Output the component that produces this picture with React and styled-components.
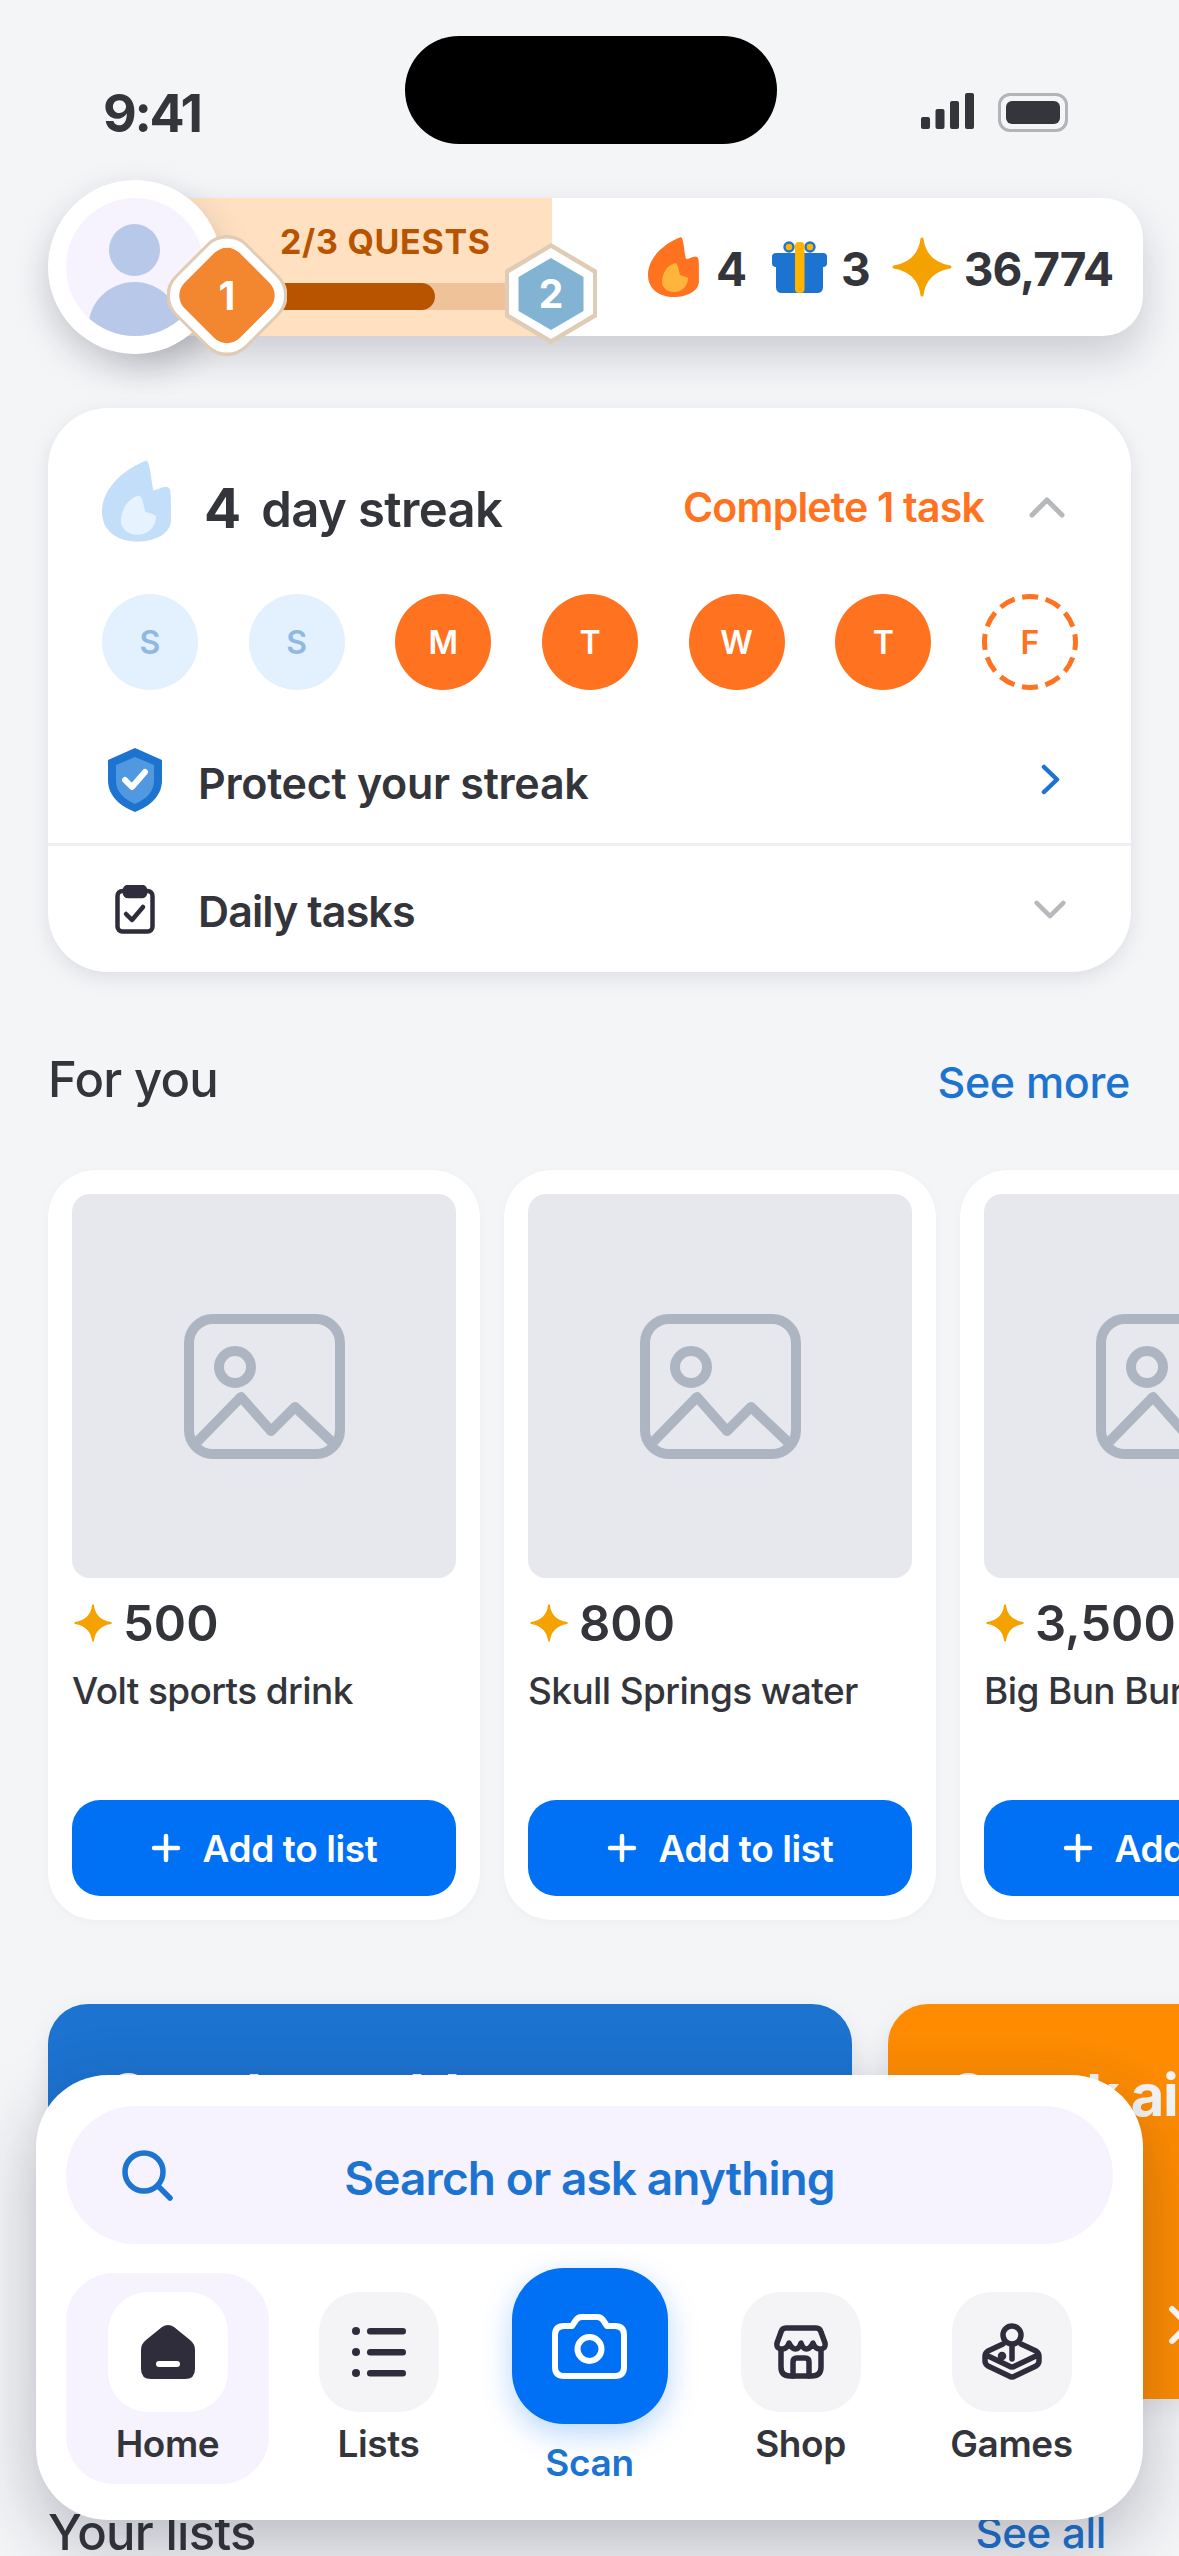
import styled, { createGlobalStyle } from "styled-components";

const ink = "#33353B";
const navInk = "#2F2D3C";
const linkBlue = "#1C73D0";
const brightBlue = "#0070F5";
const flameOrange = "#FF7220";

const GlobalStyle = createGlobalStyle`
  html, body {
    margin: 0;
    background: #F4F5F7;
  }
  * {
    box-sizing: border-box;
  }
  body {
    font-family: "Inter", "Liberation Sans", sans-serif;
    color: ${ink};
  }
`;

const Page = styled.div`
  position: relative;
  width: 1179px;
  height: 2556px;
  overflow: hidden;
  background: #F4F5F7;
`;

const StatusBar = styled.div`
  position: relative;
  height: 180px;
  display: flex;
  justify-content: space-between;
  padding: 88px 111px 0 103px;
`;

const Time = styled.div`
  font-size: 52px;
  line-height: 52px;
  font-weight: 700;
  letter-spacing: -2.3px;
  color: ${ink};
`;

const Notch = styled.div`
  position: absolute;
  top: 36px;
  left: 405px;
  width: 372px;
  height: 108px;
  border-radius: 54px;
  background: #000;
`;

const StatusIcons = styled.div`
  display: flex;
  gap: 24px;
  padding-top: 5px;
  align-items: flex-start;
`;

const Battery = styled.div`
  width: 70px;
  height: 39px;
  padding: 5px;
  border: 3px solid #B4B4B8;
  border-radius: 12px;
  &::after {
    content: "";
    display: block;
    height: 100%;
    border-radius: 6px;
    background: #34363B;
  }
`;

const HeaderRow = styled.div`
  position: relative;
  display: flex;
  height: 174px;
  margin: 0 36px 0 48px;
`;

const Avatar = styled.div`
  position: relative;
  z-index: 2;
  flex: 0 0 174px;
  height: 174px;
  padding: 18px;
  border-radius: 50%;
  background: #fff;
  box-shadow: 0 14px 34px rgba(30, 30, 50, 0.22);
`;

const AvatarFace = styled.div`
  width: 138px;
  height: 138px;
  border-radius: 50%;
  background: #F6F3FE;
  overflow: hidden;
`;

const Bar = styled.div`
  display: flex;
  flex: 1;
  height: 138px;
  margin: 18px 0 0 -90px;
  border-radius: 0 40px 40px 0;
  background: #fff;
  box-shadow: 0 20px 40px rgba(30, 30, 50, 0.18);
`;

const QuestZone = styled.div`
  position: relative;
  flex: 0 0 420px;
  display: flex;
  flex-direction: column;
  padding: 24px 0 0 148px;
  background: #FFE1C2;
`;

const QuestLabel = styled.div`
  font-size: 34px;
  line-height: 40px;
  font-weight: 700;
  letter-spacing: 0.7px;
  white-space: nowrap;
  color: #B85400;
`;

const Track = styled.div`
  width: 285px;
  height: 27px;
  margin: 21px 0 0 -45px;
  background: #EFC299;
`;

const TrackFill = styled.div`
  width: 200px;
  height: 100%;
  border-radius: 0 14px 14px 0;
  background: #B85400;
`;

const Badge = styled.div`
  position: absolute;
  z-index: 3;
  top: ${(p) => p.$top}px;
  left: ${(p) => p.$left}px;
  width: ${(p) => p.$w}px;
  height: ${(p) => p.$h}px;
  display: flex;
  align-items: center;
  justify-content: center;
  font-size: 39px;
  font-weight: 700;
  color: #fff;
  svg {
    position: absolute;
    inset: 0;
  }
  span {
    position: relative;
  }
`;

const Stats = styled.div`
  flex: 1;
  display: flex;
  align-items: center;
  padding: 0 0 0 96px;
`;

const StatValue = styled.div`
  margin: 4px ${(p) => p.$after}px 0 ${(p) => p.$before}px;
  font-size: 46px;
  font-weight: 700;
  line-height: 60px;
  letter-spacing: -1px;
  color: ${ink};
`;

const StreakCard = styled.section`
  margin: 54px 48px 0;
  height: 564px;
  border-radius: 60px;
  background: #fff;
  box-shadow: 0 6px 20px rgba(30, 30, 50, 0.1);
  padding-top: 52px;
`;

const StreakHead = styled.div`
  display: flex;
  align-items: center;
  height: 82px;
  padding: 0 66px 0 54px;
`;

const StreakCount = styled.div`
  margin: 14px 0 0 33px;
  font-size: 55px;
  font-weight: 700;
  color: ${ink};
`;

const StreakLabel = styled.div`
  margin: 16px 0 0 20px;
  font-size: 49px;
  font-weight: 600;
  letter-spacing: -0.6px;
  color: ${ink};
`;

const StreakGoal = styled.div`
  margin: 12px 45px 0 auto;
  font-size: 41px;
  font-weight: 600;
  letter-spacing: -0.8px;
  color: ${flameOrange};
`;

const ChevronSlot = styled.div`
  display: flex;
  margin-top: 13px;
`;

const Days = styled.div`
  display: flex;
  justify-content: space-between;
  margin-top: 52px;
  padding: 0 53px 0 54px;
`;

const Day = styled.div`
  position: relative;
  width: 96px;
  height: 96px;
  display: flex;
  align-items: center;
  justify-content: center;
  border-radius: 50%;
  font-size: 32px;
  font-weight: 600;
  background: ${(p) => (p.$state === "missed" ? "#E3F1FF" : p.$state === "done" ? flameOrange : "transparent")};
  color: ${(p) => (p.$state === "missed" ? "#8FB8E3" : p.$state === "done" ? "#fff" : flameOrange)};
  svg {
    position: absolute;
    inset: 0;
  }
`;

const CardRow = styled.div`
  display: flex;
  align-items: center;
  height: ${(p) => p.$h}px;
  margin-top: ${(p) => p.$top || 0}px;
  padding: 0 65px ${(p) => p.$lift || 0}px 60px;
  border-bottom: ${(p) => (p.$line ? "3px solid #EEEFF1" : "none")};
`;

const RowIcon = styled.div`
  flex: 0 0 54px;
  display: flex;
  justify-content: center;
`;

const RowLabel = styled.div`
  margin: ${(p) => p.$drop || 0}px 0 0 36px;
  font-size: 43px;
  font-weight: 600;
  letter-spacing: ${(p) => p.$track}px;
  color: ${ink};
`;

const RowChevron = styled.div`
  margin-left: auto;
  display: flex;
  width: 32px;
  justify-content: center;
`;

const SectionHead = styled.div`
  display: flex;
  align-items: center;
  justify-content: space-between;
  height: 60px;
  margin: ${(p) => p.$top}px ${(p) => p.$right}px 0 48px;
`;

const SectionTitle = styled.h2`
  margin: ${(p) => p.$lift || 0}px 0 0;
  font-size: 49px;
  font-weight: 500;
  letter-spacing: -0.7px;
  color: ${ink};
`;

const SectionLink = styled.a`
  font-size: 43px;
  font-weight: 500;
  letter-spacing: -0.3px;
  color: ${linkBlue};
`;

const CardStrip = styled.div`
  display: flex;
  gap: 24px;
  margin: 58px 0 0 48px;
`;

const ProductCard = styled.article`
  flex: 0 0 432px;
  height: 750px;
  padding: 24px;
  display: flex;
  flex-direction: column;
  border-radius: 48px;
  background: #fff;
  box-shadow: 0 2px 10px rgba(30, 30, 50, 0.03);
`;

const Thumb = styled.div`
  flex: 0 0 384px;
  display: flex;
  align-items: center;
  justify-content: center;
  border-radius: 18px;
  background: #E7E8ED;
`;

const Price = styled.div`
  display: flex;
  align-items: center;
  gap: 11px;
  margin-top: 20px;
  height: 50px;
  font-size: 49px;
  font-weight: 600;
  white-space: nowrap;
  padding-left: 2px;
`;

const ProductName = styled.div`
  margin-top: 20px;
  font-size: 37px;
  line-height: 46px;
  font-weight: 500;
  letter-spacing: -0.6px;
  white-space: nowrap;
`;

const AddButton = styled.button`
  margin-top: auto;
  height: 96px;
  display: flex;
  align-items: center;
  justify-content: center;
  gap: 22px;
  border: none;
  border-radius: 28px;
  background: ${brightBlue};
  color: #fff;
  font-family: inherit;
  font-size: 37px;
  font-weight: 600;
  letter-spacing: -0.4px;
  white-space: nowrap;
`;

const BannerStrip = styled.div`
  display: flex;
  gap: 36px;
  margin: 84px 0 0 48px;
`;

const Banner = styled.div`
  flex: 0 0 804px;
  height: 395px;
  padding: 56px 0 0 61px;
  display: flex;
  flex-direction: column;
  border-radius: 40px;
  background: ${(p) => p.$bg};
  box-shadow: 0 8px 24px rgba(30, 30, 50, 0.08);
`;

const BannerTitle = styled.div`
  font-size: 58px;
  line-height: 70px;
  font-weight: 700;
  letter-spacing: -1.5px;
  color: #F4F5F7;
  white-space: nowrap;
`;

const BannerArrow = styled.div`
  margin: 175px 0 0 219px;
`;

const BottomNav = styled.nav`
  position: absolute;
  z-index: 5;
  left: 36px;
  right: 36px;
  bottom: 36px;
  height: 445px;
  padding: 31px 30px 0;
  border-radius: 72px;
  background: #fff;
  box-shadow: 0 24px 70px rgba(30, 30, 50, 0.28);
`;

const SearchPill = styled.div`
  position: relative;
  height: 138px;
  display: flex;
  align-items: center;
  justify-content: center;
  padding-top: 5px;
  border-radius: 69px;
  background: #F6F3FE;
  font-size: 46px;
  font-weight: 600;
  letter-spacing: -0.9px;
  color: ${linkBlue};
  svg {
    position: absolute;
    left: 55px;
    top: 43px;
  }
`;

const Tabs = styled.div`
  display: flex;
  justify-content: space-between;
  margin-top: 29px;
`;

const Tab = styled.div`
  flex: 0 0 203px;
  height: 211px;
  display: flex;
  flex-direction: column;
  align-items: center;
  padding-top: ${(p) => (p.$scan ? 0 : 19)}px;
  margin-top: ${(p) => (p.$scan ? -5 : 0)}px;
  border-radius: 48px;
  background: ${(p) => (p.$active ? "#F6F3FE" : "transparent")};
`;

const TabIcon = styled.div`
  flex: 0 0 auto;
  width: ${(p) => (p.$scan ? 156 : 120)}px;
  height: ${(p) => (p.$scan ? 156 : 120)}px;
  display: flex;
  align-items: center;
  justify-content: center;
  border-radius: ${(p) => (p.$scan ? 52 : 40)}px;
  background: ${(p) => (p.$scan ? brightBlue : p.$active ? "#fff" : "#F4F4F6")};
  box-shadow: ${(p) => (p.$scan ? "0 10px 30px rgba(0, 112, 245, 0.28)" : "none")};
`;

const TabLabel = styled.div`
  flex: 0 0 auto;
  margin-top: ${(p) => (p.$scan ? 17 : 10)}px;
  font-size: 37px;
  line-height: 44px;
  font-weight: 600;
  letter-spacing: -0.4px;
  color: ${(p) => (p.$scan ? linkBlue : ink)};
`;

function Flame({ w = 51, h = 60, outer = flameOrange, inner = "#FFB53C" }) {
  return (
    <svg width={w} height={h} viewBox="0 0 51 60">
      <path fill={outer} d="M33 0C36 3 36 14 38 22C42 22 46 18 49 20C51 21 51 24 51 44C51 54 39 60 26 60C11 60 0 52 0 38C0 20 17 6 33 0Z" />
      <path fill={inner} d="M28 26C20 27 14 36 14 45C14 51 20 55 26 55C34 55 40 49 40 41C37 39 34 39 32 38C31 34 30 28 28 26Z" />
    </svg>
  );
}

function Gift() {
  return (
    <svg width="55" height="52" viewBox="0 0 55 52">
      <circle cx="17" cy="6" r="4.5" fill="#FFB400" stroke="#1C73D0" strokeWidth="2.4" />
      <circle cx="38" cy="6" r="4.5" fill="#FFB400" stroke="#1C73D0" strokeWidth="2.4" />
      <rect x="0" y="12" width="55" height="14" rx="4" fill="#1C73D0" />
      <path fill="#1C73D0" d="M4 24H51V46Q51 52 45 52H10Q4 52 4 46Z" />
      <rect x="23" y="1" width="9.5" height="51" rx="4" fill="#FFB400" />
    </svg>
  );
}

function Star({ size = 60 }) {
  return (
    <svg width={size} height={size} viewBox="0 0 60 60">
      <path
        fill="#F4A200"
        stroke="#F4A200"
        strokeWidth="3"
        strokeLinejoin="round"
        d="M30 2C32 18 41 27 58 30C41 33 32 42 30 58C28 42 19 33 2 30C19 27 28 18 30 2Z"
      />
    </svg>
  );
}

function Chevron({ dir, color, w = 36, h = 21 }) {
  const paths = {
    up: "M3 18L18 3L33 18",
    down: "M3 3L18 18L33 3",
  };
  if (dir === "right") {
    return (
      <svg width="19" height="31" viewBox="0 0 19 31" fill="none" stroke={color} strokeWidth="4.5" strokeLinecap="round" strokeLinejoin="round">
        <path d="M3 3L16 15.5L3 28" />
      </svg>
    );
  }
  return (
    <svg width={w} height={h} viewBox="0 0 36 21" fill="none" stroke={color} strokeWidth="5" strokeLinecap="round" strokeLinejoin="round">
      <path d={paths[dir]} />
    </svg>
  );
}

function Placeholder() {
  return (
    <svg width="161" height="145" viewBox="0 0 161 145" fill="none" stroke="#AEB5C2" strokeWidth="10" strokeLinecap="round" strokeLinejoin="round">
      <rect x="5" y="5" width="151" height="135" rx="24" />
      <circle cx="51" cy="53" r="16" />
      <path d="M14 127L57 83L87 117L111 93L150 130" />
    </svg>
  );
}

function Product({ price, name }) {
  return (
    <ProductCard>
      <Thumb>
        <Placeholder />
      </Thumb>
      <Price>
        <Star size={38} />
        {price}
      </Price>
      <ProductName>{name}</ProductName>
      <AddButton>
        <svg width="30" height="30" viewBox="0 0 30 30" stroke="#fff" strokeWidth="4.5" strokeLinecap="round">
          <path d="M15 3V27M3 15H27" />
        </svg>
        Add to list
      </AddButton>
    </ProductCard>
  );
}

const days = [
  ["S", "missed"],
  ["S", "missed"],
  ["M", "done"],
  ["T", "done"],
  ["W", "done"],
  ["T", "done"],
  ["F", "today"],
];

const products = [
  { price: "500", name: "Volt sports drink" },
  { price: "800", name: "Skull Springs water" },
  { price: "3,500", name: "Big Bun Burger" },
];

export default function App() {
  return (
    <Page>
      <GlobalStyle />
      <StatusBar>
        <Time>9:41</Time>
        <Notch />
        <StatusIcons>
          <svg width="53" height="36" viewBox="0 0 53 36" fill="#33353B">
            <rect x="0" y="24" width="9" height="12" rx="2" />
            <rect x="14.5" y="16" width="9" height="20" rx="2" />
            <rect x="29" y="8" width="9" height="28" rx="2" />
            <rect x="44" y="0" width="9" height="36" rx="2" />
          </svg>
          <Battery />
        </StatusIcons>
      </StatusBar>

      <HeaderRow>
        <Avatar>
          <AvatarFace>
            <svg width="138" height="138" viewBox="0 0 138 138" fill="#B8C8E8">
              <ellipse cx="68.5" cy="52" rx="25.5" ry="26" />
              <ellipse cx="68.5" cy="129" rx="46" ry="45" />
            </svg>
          </AvatarFace>
        </Avatar>
        <Bar>
          <QuestZone>
            <QuestLabel>2/3 QUESTS</QuestLabel>
            <Track>
              <TrackFill />
            </Track>
            <Badge $top={37} $left={35} $w={120} $h={121}>
              <svg width="120" height="121" viewBox="0 0 120 121">
                <rect x="9" y="9.5" width="102" height="102" rx="28" fill="#E0CBB5" transform="rotate(45 60 60.5)" />
                <rect x="12" y="12.5" width="96" height="96" rx="26" fill="#fff" transform="rotate(45 60 60.5)" />
                <rect x="21" y="21.5" width="78" height="78" rx="18" fill="#F28730" transform="rotate(45 60 60.5)" />
              </svg>
              <span>1</span>
            </Badge>
            <Badge $top={45} $left={373} $w={92} $h={101}>
              <svg width="92" height="101" viewBox="0 0 92 101">
                <polygon points="46,0 92,27 92,74 46,101 0,74 0,27" fill="#E0CBB5" />
                <polygon points="46,5 88,30 88,71 46,96 4,71 4,30" fill="#fff" />
                <polygon points="46,15 78.5,34 78.5,68 46,87 13.5,68 13.5,34" fill="#82B3D2" />
              </svg>
              <span>2</span>
            </Badge>
          </QuestZone>
          <Stats>
            <Flame />
            <StatValue $before={17} $after={26}>4</StatValue>
            <Gift />
            <StatValue $before={14} $after={22}>3</StatValue>
            <Star />
            <StatValue $before={12} $after={0}>36,774</StatValue>
          </Stats>
        </Bar>
      </HeaderRow>

      <StreakCard>
        <StreakHead>
          <Flame w={69} h={82} outer="#C2DEF8" inner="#E6F3FE" />
          <StreakCount>4</StreakCount>
          <StreakLabel>day streak</StreakLabel>
          <StreakGoal>Complete 1 task</StreakGoal>
          <ChevronSlot>
            <Chevron dir="up" color="#B7B8BB" />
          </ChevronSlot>
        </StreakHead>
        <Days>
          {days.map(([letter, state], i) => (
            <Day key={i} $state={state}>
              {state === "today" && (
                <svg width="96" height="96" viewBox="0 0 96 96" fill="none" stroke={flameOrange} strokeWidth="5">
                  <circle cx="48" cy="48" r="45.5" strokeDasharray="16 7.8" strokeDashoffset="8" />
                </svg>
              )}
              {letter}
            </Day>
          ))}
        </Days>
        <CardRow $h={100} $top={56} $lift={30} $line>
          <RowIcon>
            <svg width="54" height="64" viewBox="0 0 54 64">
              <path fill="#1C73D0" d="M27 0L54 12V32C54 48 42 58 27 64C12 58 0 48 0 32V12Z" />
              <path fill="#5098E0" d="M27 9L46 17V33C46 44 38 51 27 56C16 51 8 44 8 33V17Z" />
              <path fill="none" stroke="#fff" strokeWidth="6" strokeLinecap="round" strokeLinejoin="round" d="M17 32L24 39L37 24" />
            </svg>
          </RowIcon>
          <RowLabel $drop={6} $track={-0.3}>Protect your streak</RowLabel>
          <RowChevron>
            <Chevron dir="right" color={linkBlue} />
          </RowChevron>
        </CardRow>
        <CardRow $h={126}>
          <RowIcon>
            <svg width="40" height="49" viewBox="0 0 40 49" fill="none" stroke={navInk} strokeWidth="4.5" strokeLinecap="round" strokeLinejoin="round">
              <rect x="2.5" y="6" width="35" height="40.5" rx="5" />
              <rect x="10" y="2" width="20" height="9" rx="3" fill={navInk} />
              <path d="M11 29L17 35L28 22" />
            </svg>
          </RowIcon>
          <RowLabel $drop={4} $track={-0.9}>Daily tasks</RowLabel>
          <RowChevron>
            <Chevron dir="down" color="#B7B8BB" w={32} h={19} />
          </RowChevron>
        </CardRow>
      </StreakCard>

      <SectionHead $top={80} $right={49}>
        <SectionTitle $lift={-5}>For you</SectionTitle>
        <SectionLink>See more</SectionLink>
      </SectionHead>

      <CardStrip>
        {products.map((product) => (
          <Product key={product.name} {...product} />
        ))}
      </CardStrip>

      <BannerStrip>
        <Banner $bg="#1C73D0">
          <BannerTitle>Speak to add</BannerTitle>
        </Banner>
        <Banner $bg="#FF8C00">
          <BannerTitle>Speak aisle</BannerTitle>
          <BannerArrow>
            <svg width="24" height="40" viewBox="0 0 24 40" fill="none" stroke="#fff" strokeWidth="6" strokeLinecap="round" strokeLinejoin="round">
              <path d="M4 4L20 20L4 36" />
            </svg>
          </BannerArrow>
        </Banner>
      </BannerStrip>

      <SectionHead $top={103} $right={73}>
        <SectionTitle>Your lists</SectionTitle>
        <SectionLink style={{ fontSize: 42 }}>See all</SectionLink>
      </SectionHead>

      <BottomNav>
        <SearchPill>
          <svg width="52" height="52" viewBox="0 0 52 52" fill="none" stroke={linkBlue} strokeWidth="5.5" strokeLinecap="round">
            <circle cx="23" cy="23" r="19" />
            <path d="M37 37L49 49" />
          </svg>
          Search or ask anything
        </SearchPill>
        <Tabs>
          <Tab $active>
            <TabIcon $active>
              <svg width="54" height="54" viewBox="0 0 54 54">
                <path fill={navInk} d="M21 2Q27 -2 33 2L49 15Q54 19 54 25V44Q54 54 44 54H10Q0 54 0 44V25Q0 19 5 15Z" />
                <rect x="15" y="36" width="24" height="6" rx="3" fill="#fff" />
              </svg>
            </TabIcon>
            <TabLabel>Home</TabLabel>
          </Tab>
          <Tab>
            <TabIcon>
              <svg width="54" height="50" viewBox="0 0 54 50" fill={navInk}>
                <circle cx="4" cy="4" r="4" />
                <circle cx="4" cy="25" r="4" />
                <circle cx="4" cy="46" r="4" />
                <rect x="15" y="1" width="39" height="6.5" rx="3.2" />
                <rect x="15" y="22" width="39" height="6.5" rx="3.2" />
                <rect x="15" y="43" width="39" height="6.5" rx="3.2" />
              </svg>
            </TabIcon>
            <TabLabel>Lists</TabLabel>
          </Tab>
          <Tab $scan>
            <TabIcon $scan>
              <svg width="75" height="65" viewBox="0 0 75 65" fill="none" stroke="#fff" strokeWidth="6" strokeLinejoin="round">
                <path d="M12 12H20L24 6Q26 3 30 3H45Q49 3 51 6L55 12H63Q72 12 72 21V53Q72 62 63 62H12Q3 62 3 53V21Q3 12 12 12Z" />
                <circle cx="37.5" cy="35" r="12" />
              </svg>
            </TabIcon>
            <TabLabel $scan>Scan</TabLabel>
          </Tab>
          <Tab>
            <TabIcon>
              <svg width="54" height="54" viewBox="0 0 54 54" fill="none" stroke={navInk} strokeWidth="5.5" strokeLinecap="round" strokeLinejoin="round">
                <path d="M12 3H42Q46 3 47 7L51 18Q52 24 46 24Q41 24 39 18Q36 24 32.5 24Q29 24 27 18Q25 24 21.5 24Q18 24 15 18Q13 24 8 24Q2 24 3 18L7 7Q8 3 12 3Z" />
                <path d="M7 25V42Q7 51 16 51H38Q47 51 47 42V25" />
                <path d="M19 51V37Q19 33 23 33H31Q35 33 35 37V51" />
              </svg>
            </TabIcon>
            <TabLabel>Shop</TabLabel>
          </Tab>
          <Tab>
            <TabIcon>
              <svg width="60" height="58" viewBox="0 0 60 58" fill="none" stroke={navInk} strokeWidth="5.5" strokeLinecap="round" strokeLinejoin="round">
                <circle cx="30" cy="12" r="9" />
                <path d="M30 24V36" />
                <path d="M21 21L6 28Q3 30 3 33V38Q3 41 6 43L27 53Q30 55 33 53L54 43Q57 41 57 38V33Q57 30 54 28L39 21" />
                <path d="M4 32L27 43Q30 45 33 43L56 32" />
                <circle cx="20" cy="33" r="1.5" fill={navInk} />
              </svg>
            </TabIcon>
            <TabLabel>Games</TabLabel>
          </Tab>
        </Tabs>
      </BottomNav>
    </Page>
  );
}
